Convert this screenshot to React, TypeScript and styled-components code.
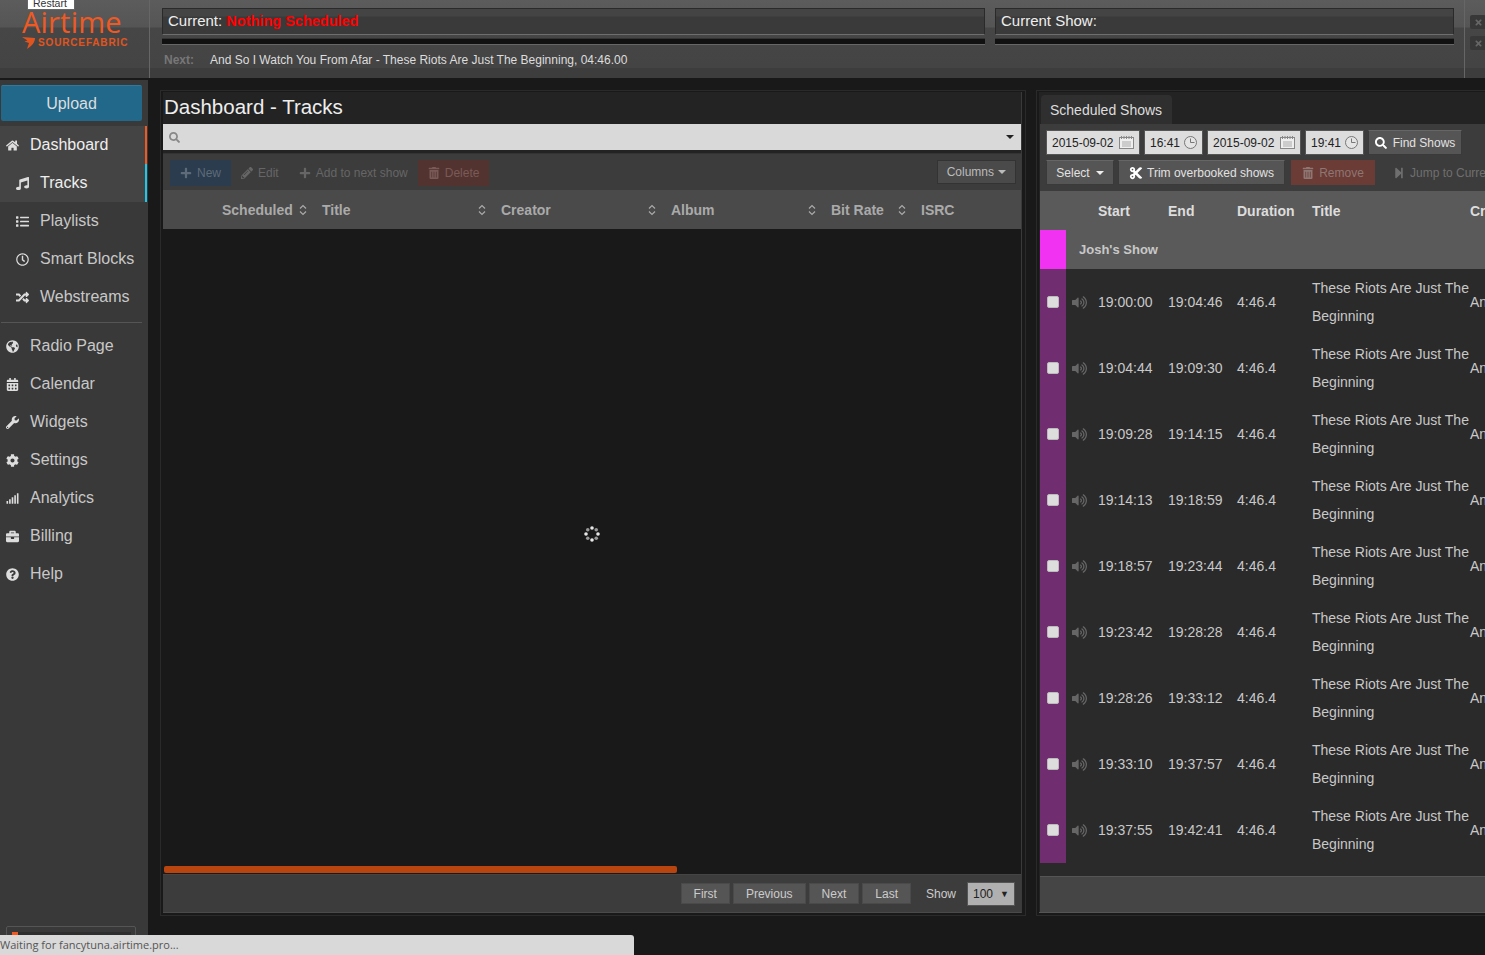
import React from 'react';
import styled, { createGlobalStyle } from 'styled-components';
import {
  FaBriefcase,
  FaCalendarAlt,
  FaCog,
  FaCut,
  FaGlobeAmericas,
  FaHome,
  FaList,
  FaMusic,
  FaPencilAlt,
  FaPlus,
  FaQuestionCircle,
  FaRandom,
  FaRegClock,
  FaSearch,
  FaSignal,
  FaStepForward,
  FaTimes,
  FaTrashAlt,
  FaVolumeUp,
  FaWrench,
} from 'react-icons/fa';

const GlobalStyle = createGlobalStyle`
  html, body {
    margin: 0;
    padding: 0;
    height: 100%;
    overflow: hidden;
    background: #191919;
  }
  * { box-sizing: border-box; }
  body {
    font-family: "Liberation Sans", Arial, sans-serif;
    font-size: 14px;
    color: #ccc;
  }
`;

const Page = styled.div`
  position: relative;
  display: flex;
  flex-direction: column;
  width: 1485px;
  height: 955px;
  overflow: hidden;
`;

/* header */
const Header = styled.header`
  flex: 0 0 78px;
  display: flex;
  background: linear-gradient(#5c5c5c 0, #555 27px, #464646 28px, #444 68px, #3d3d3d 68px);
`;

const LogoCol = styled.div`
  flex: 0 0 150px;
  border-right: 1px solid #666;
  padding: 7px 0 0 22px;
  margin-bottom: 0;
`;

const LogoWord = styled.div`
  font-family: "Open Sans", sans-serif;
  font-size: 29px;
  line-height: 30px;
  letter-spacing: 0.2px;
  color: #f05a22;
`;

const LogoSub = styled.div`
  display: flex;
  align-items: center;
  gap: 3px;
  margin-top: 0;
  font-size: 10px;
  line-height: 12px;
  font-weight: 700;
  letter-spacing: 0.85px;
  color: #e0551f;
`;

const NowPlaying = styled.div`
  flex: 0 0 1315px;
  padding: 8px 0 0 12px;
  border-right: 1px solid #666;
`;

const NowRow = styled.div`
  display: flex;
  gap: 10px;
`;

const NowCol = styled.div<{ $w: number }>`
  width: ${(p) => p.$w}px;
`;

const NowBox = styled.div`
  height: 27px;
  padding: 3px 5px 0;
  border: 1px solid #2a2a2a;
  border-bottom: 1px solid #6e6e6e;
  background: linear-gradient(#444 0, #444 7px, #3a3a3a 8px);
  font-size: 15px;
  line-height: 17px;
  color: #eee;
`;

const Nothing = styled.span`
  font-weight: 700;
  font-size: 14.5px;
  color: #f00;
`;

const ProgressTrack = styled.div`
  height: 7px;
  margin-top: 3px;
  background: #111;
  border-top: 1px solid #333;
  border-bottom: 1px solid #666;
`;

const NextLine = styled.div`
  display: flex;
  margin: 8px 0 0 2px;
  font-size: 12px;
  line-height: 15px;
  color: #ddd;
`;

const NextLabel = styled.span`
  flex: 0 0 46px;
  font-weight: 700;
  color: #777;
`;

const CloseCol = styled.div`
  flex: 1;
  display: flex;
  flex-direction: column;
  gap: 7px;
  padding: 15px 0 0 5px;
`;

const CloseBtn = styled.div`
  width: 16px;
  height: 14px;
  display: flex;
  align-items: center;
  justify-content: center;
  background: #383838;
  border-radius: 2px;
  color: #666;
  font-size: 9px;
`;

/* sidebar */
const Body = styled.div`
  flex: 1;
  display: flex;
  min-height: 0;
`;

const Sidebar = styled.nav`
  position: relative;
  flex: 0 0 148px;
  margin-top: 2px;
  padding: 5px 0 0 1px;
  background: #393939;
`;

const Upload = styled.div`
  width: 141px;
  height: 36px;
  display: flex;
  align-items: center;
  justify-content: center;
  background: #22688a;
  border-top: 1px solid #2f7a9c;
  border-radius: 2px;
  font-size: 16px;
  color: #ddd;
`;

const NavList = styled.div`
  margin: 5px 0 0 -1px;
`;

const NavItem = styled.div<{ $sub?: boolean; $bar?: string; $active?: boolean }>`
  height: 38px;
  width: 147px;
  display: flex;
  align-items: center;
  padding-left: ${(p) => (p.$sub ? 16 : 6)}px;
  font-size: 16px;
  background: ${(p) => (p.$active ? '#444' : 'transparent')};
  color: ${(p) => (p.$active ? '#eee' : '#c8c8c8')};
  border-right: 2px solid ${(p) => p.$bar || 'transparent'};
`;

const NavIcon = styled.span`
  flex: 0 0 24px;
  display: flex;
  align-items: center;
  font-size: 13px;
  color: #ddd;
`;

const NavRule = styled.div`
  width: 141px;
  height: 1px;
  margin: 6px 0 4px 1px;
  background: #555;
`;

const StatusWidget = styled.div`
  position: absolute;
  left: 6px;
  top: 846px;
  width: 130px;
  height: 30px;
  border: 1px solid #555;
  border-radius: 2px;
  padding: 5px 4px 0 5px;
`;

const StatusInner = styled.div`
  height: 20px;
  background: #2e2e2e;
  border-left: 6px solid #f05a22;
`;

/* panels */
const Main = styled.main`
  flex: 1;
  display: flex;
  gap: 10px;
  padding: 12px 0 0 12px;
  min-width: 0;
`;

const Panel = styled.section<{ $w: number }>`
  flex: 0 0 ${(p) => p.$w}px;
  height: 826px;
  padding: 1px 0 1px 2px;
  border: 1px solid #2a2a2a;
  overflow: hidden;
  display: flex;
  flex-direction: column;
`;

const LibInner = styled.div`
  width: 859px;
  height: 821px;
  display: flex;
  flex-direction: column;
  background: #232323;
  border-right: 1px solid #3a3a3a;
  border-bottom: 1px solid #4a4a4a;
`;

const Title = styled.h1`
  flex: 0 0 32px;
  margin: 0;
  padding: 3px 0 0 1px;
  font-size: 20.5px;
  line-height: 24px;
  font-weight: 400;
  color: #eee;
`;

const SearchBar = styled.div`
  flex: 0 0 26px;
  display: flex;
  align-items: center;
  justify-content: space-between;
  padding: 0 7px 0 6px;
  background: #d9d9d9;
  color: #888;
  font-size: 11px;
`;

const Caret = styled.span`
  width: 0;
  height: 0;
  border-left: 4px solid transparent;
  border-right: 4px solid transparent;
  border-top: 4px solid ${(p) => p.color || '#222'};
`;

const LibToolbar = styled.div`
  flex: 0 0 37px;
  margin-top: 3px;
  display: flex;
  align-items: flex-start;
  padding: 6px 5px 0 7px;
  background: #3c3c3c;
  border-top: 1px solid #333;
`;

const ToolBtn = styled.div<{ $bg?: string; $color?: string }>`
  height: 26px;
  display: flex;
  align-items: center;
  gap: 5px;
  padding: 0 10px;
  font-size: 12px;
  font-weight: 400;
  color: ${(p) => p.$color || '#666'};
  background: ${(p) => p.$bg || 'transparent'};
`;

const ColumnsBtn = styled.div`
  margin-left: auto;
  height: 24px;
  display: flex;
  align-items: center;
  gap: 4px;
  padding: 0 9px;
  background: #4a4a4a;
  border: 1px solid #333;
  font-size: 12px;
  color: #bbb;
`;

const LibHead = styled.div`
  flex: 0 0 39px;
  display: grid;
  grid-template-columns: 59px 100px 179px 170px 160px 90px 1fr;
  align-items: center;
  background: #4a4a4a;
  font-size: 14px;
  font-weight: 700;
  color: #aaa;
`;

const SortCell = styled.div`
  display: flex;
  align-items: center;
  justify-content: space-between;
  padding-right: 15px;
  color: #aaa;
`;

const LibBody = styled.div`
  flex: 1;
  display: flex;
  align-items: center;
  justify-content: center;
  padding-bottom: 28px;
  background: #191919;
`;

const Scrollbar = styled.div`
  flex: 0 0 8px;
  background: #191919;
`;

const ScrollThumb = styled.div`
  width: 513px;
  height: 7px;
  margin-left: 1px;
  background: #b8450f;
  border-radius: 2px;
`;

const Pager = styled.div`
  flex: 0 0 38px;
  display: flex;
  align-items: center;
  justify-content: flex-end;
  gap: 3px;
  padding: 0 6px 0 0;
  background: #3c3c3c;
  border-top: 1px solid #444;
`;

const PageBtn = styled.div`
  height: 21px;
  display: flex;
  align-items: center;
  padding: 0 12px;
  background: #555;
  border: 1px solid #4a4a4a;
  font-size: 12px;
  color: #ccc;
`;

const ShowLabel = styled.span`
  margin: 0 8px 0 12px;
  font-size: 12px;
  color: #ccc;
`;

const PageSelect = styled.div`
  width: 48px;
  height: 24px;
  display: flex;
  align-items: center;
  justify-content: space-between;
  padding: 0 5px;
  background: #b0b0b0;
  border: 1px solid #555;
  font-size: 12px;
  color: #222;
`;

const SmallTri = styled.span`
  font-size: 9px;
  color: #222;
`;

/* schedule */
const SchedInner = styled.div`
  width: 470px;
  height: 821px;
  display: flex;
  flex-direction: column;
  background: #232323;
  border-bottom: 1px solid #555;
`;

const TabStrip = styled.div`
  flex: 0 0 32px;
  display: flex;
  align-items: flex-end;
  padding-left: 2px;
`;

const Tab = styled.div`
  width: 131px;
  height: 29px;
  padding: 0 9px;
  display: flex;
  align-items: center;
  background: #2f2f2f;
  border-radius: 4px 4px 0 0;
  font-size: 14px;
  color: #ddd;
`;

const SchedTools = styled.div`
  flex: 0 0 67px;
  display: flex;
  flex-direction: column;
  gap: 5px;
  padding: 6px 0 0 6px;
  margin-left: 1px;
  background: #3c3c3c;
`;

const ToolRow = styled.div`
  display: flex;
  align-items: center;
  gap: 4px;
  white-space: nowrap;
`;

const DateField = styled.div<{ $w: number }>`
  width: ${(p) => p.$w}px;
  height: 25px;
  display: flex;
  align-items: center;
  justify-content: space-between;
  padding: 0 5px;
  background: #ddd;
  border: 1px solid #555;
  font-size: 12px;
  color: #222;
`;

const DarkBtn = styled.div<{ $w?: number; $gap?: number }>`
  ${(p) => (p.$w ? `width: ${p.$w}px;` : '')}
  height: 25px;
  display: flex;
  align-items: center;
  justify-content: center;
  gap: ${(p) => p.$gap ?? 6}px;
  background: #555;
  border: 1px solid #3a3a3a;
  border-top-color: #666;
  font-size: 12px;
  color: #e2e2e2;
`;

const RemoveBtn = styled.div`
  width: 84px;
  height: 25px;
  display: flex;
  align-items: center;
  justify-content: center;
  gap: 5px;
  margin-left: 2px;
  background: #6b3b36;
  font-size: 12px;
  font-weight: 400;
  color: #8e7672;
`;

const JumpBtn = styled.div`
  display: flex;
  align-items: center;
  gap: 5px;
  margin-left: 14px;
  font-size: 12px;
  color: #6f6f6f;
`;

const gridCols = '26px 32px 70px 69px 75px 158px 1fr';

const SchedHead = styled.div`
  flex: 0 0 39px;
  margin-left: 1px;
  display: grid;
  grid-template-columns: ${gridCols};
  align-items: center;
  background: #5a5a5a;
  font-size: 14px;
  font-weight: 700;
  color: #ddd;
`;

const ShowRow = styled.div`
  flex: 0 0 39px;
  margin-left: 1px;
  display: flex;
  align-items: center;
  background: #5a5a5a;
  font-size: 13px;
  font-weight: 700;
  color: #c8c8c8;
`;

const ShowSwatch = styled.div`
  flex: 0 0 26px;
  height: 100%;
  margin-right: 13px;
  background: #f232f2;
`;

const Rows = styled.div`
  flex: 1;
  margin-left: 1px;
  background: #2a2a2a;
`;

const Row = styled.div`
  height: 66px;
  display: grid;
  grid-template-columns: ${gridCols};
  align-items: center;
  font-size: 14px;
  color: #c8c8c8;
  white-space: nowrap;
`;

const CheckCell = styled.div`
  height: 100%;
  display: flex;
  align-items: center;
  justify-content: center;
  background: #702d70;
`;

const Check = styled.span`
  width: 12px;
  height: 12px;
  background: #ddd;
  border: 1px solid #bbb;
  border-radius: 2px;
`;

const SpeakerCell = styled.div`
  display: flex;
  align-items: center;
  padding-left: 6px;
  font-size: 15px;
  color: #666;
`;

const TrackTitle = styled.div`
  line-height: 28px;
  white-space: normal;
`;

const SchedFoot = styled.div`
  flex: 0 0 36px;
  margin-left: 1px;
  background: #454545;
  border-top: 1px solid #555;
`;

/* browser overlays */
const Tooltip = styled.div`
  position: absolute;
  left: 27px;
  top: -4px;
  width: 48px;
  height: 14px;
  padding-left: 5px;
  background: #fff;
  border: 1px solid #666;
  font-size: 10.5px;
  line-height: 12px;
  color: #333;
`;

const BrowserStatus = styled.div`
  position: absolute;
  left: 0;
  bottom: 0;
  width: 634px;
  height: 20px;
  background: #d9d9d9;
  border-radius: 0 3px 0 0;
  font-family: "Open Sans", sans-serif;
  font-size: 11px;
  line-height: 20px;
  color: #555;
`;

function SortIcon() {
  return (
    <svg width="8" height="12" viewBox="0 0 8 12" fill="none" stroke="currentColor" strokeWidth="1.2">
      <path d="M1 4.5 4 1.5 7 4.5M1 7.5 4 10.5 7 7.5" />
    </svg>
  );
}

function Mark() {
  return (
    <svg width="13" height="12" viewBox="0 0 13 12" fill="#e0551f">
      <path d="M0 0 13 1C13 5 10 9 5 12L7 6 2.5 4.5 5.5 3.5Z" />
    </svg>
  );
}

function Spinner() {
  const dots = [0, 45, 90, 135, 180, 225, 270, 315];
  return (
    <svg width="16" height="16" viewBox="0 0 16 16">
      {dots.map((a, i) => (
        <circle
          key={a}
          cx={8 + 6 * Math.cos((a * Math.PI) / 180)}
          cy={8 + 6 * Math.sin((a * Math.PI) / 180)}
          r="1.8"
          fill={i % 2 ? '#999' : '#e8e8e8'}
        />
      ))}
    </svg>
  );
}

function CalIcon() {
  return (
    <svg width="15" height="13" viewBox="0 0 15 13" fill="#eee" stroke="#888" strokeWidth="1">
      <rect x="0.5" y="1.5" width="14" height="11" />
      <path d="M2.5 0V3M5 0V3M7.5 0V3M10 0V3M12.5 0V3" />
      <path d="M3 6H12M3 8H12M3 10H12" stroke="#aaa" />
    </svg>
  );
}

function ClockIcon() {
  return (
    <svg width="13" height="13" viewBox="0 0 13 13" fill="#e4e4e4" stroke="#777" strokeWidth="1">
      <circle cx="6.5" cy="6.5" r="6" />
      <path d="M6.5 2.5V6.5H10.5" />
    </svg>
  );
}

const topNav = [
  { label: 'Radio Page', icon: <FaGlobeAmericas /> },
  { label: 'Calendar', icon: <FaCalendarAlt /> },
  { label: 'Widgets', icon: <FaWrench /> },
  { label: 'Settings', icon: <FaCog /> },
  { label: 'Analytics', icon: <FaSignal /> },
  { label: 'Billing', icon: <FaBriefcase /> },
  { label: 'Help', icon: <FaQuestionCircle /> },
];

const libCols = ['Title', 'Creator', 'Album'];

const tracks = [
  ['19:00:00', '19:04:46'],
  ['19:04:44', '19:09:30'],
  ['19:09:28', '19:14:15'],
  ['19:14:13', '19:18:59'],
  ['19:18:57', '19:23:44'],
  ['19:23:42', '19:28:28'],
  ['19:28:26', '19:33:12'],
  ['19:33:10', '19:37:57'],
  ['19:37:55', '19:42:41'],
];

export default function App() {
  return (
    <Page>
      <GlobalStyle />
      <Header>
        <LogoCol>
          <LogoWord>Airtime</LogoWord>
          <LogoSub>
            <Mark />
            SOURCEFABRIC
          </LogoSub>
        </LogoCol>
        <NowPlaying>
          <NowRow>
            <NowCol $w={823}>
              <NowBox>
                Current: <Nothing>Nothing Scheduled</Nothing>
              </NowBox>
              <ProgressTrack />
            </NowCol>
            <NowCol $w={459}>
              <NowBox>Current Show:</NowBox>
              <ProgressTrack />
            </NowCol>
          </NowRow>
          <NextLine>
            <NextLabel>Next:</NextLabel>
            And So I Watch You From Afar - These Riots Are Just The Beginning, 04:46.00
          </NextLine>
        </NowPlaying>
        <CloseCol>
          <CloseBtn><FaTimes /></CloseBtn>
          <CloseBtn><FaTimes /></CloseBtn>
        </CloseCol>
      </Header>

      <Body>
        <Sidebar>
          <Upload>Upload</Upload>
          <NavList>
            <NavItem $active $bar="#f05a22">
              <NavIcon><FaHome /></NavIcon>Dashboard
            </NavItem>
            <NavItem $active $sub $bar="#1fc8ea">
              <NavIcon><FaMusic /></NavIcon>Tracks
            </NavItem>
            <NavItem $sub>
              <NavIcon><FaList /></NavIcon>Playlists
            </NavItem>
            <NavItem $sub>
              <NavIcon><FaRegClock /></NavIcon>Smart Blocks
            </NavItem>
            <NavItem $sub>
              <NavIcon><FaRandom /></NavIcon>Webstreams
            </NavItem>
            <NavRule />
            {topNav.map((n) => (
              <NavItem key={n.label}>
                <NavIcon>{n.icon}</NavIcon>
                {n.label}
              </NavItem>
            ))}
          </NavList>
          <StatusWidget>
            <StatusInner />
          </StatusWidget>
        </Sidebar>

        <Main>
          <Panel $w={866}>
            <LibInner>
              <Title>Dashboard - Tracks</Title>
              <SearchBar>
                <FaSearch />
                <Caret />
              </SearchBar>
              <LibToolbar>
                <ToolBtn $bg="#2a3c4e" $color="#5e6b78">
                  <FaPlus />New
                </ToolBtn>
                <ToolBtn>
                  <FaPencilAlt />Edit
                </ToolBtn>
                <ToolBtn>
                  <FaPlus />Add to next show
                </ToolBtn>
                <ToolBtn $bg="#533330" $color="#7a5a56">
                  <FaTrashAlt />Delete
                </ToolBtn>
                <ColumnsBtn>
                  Columns <Caret color="#bbb" />
                </ColumnsBtn>
              </LibToolbar>
              <LibHead>
                <span />
                <SortCell>Scheduled <SortIcon /></SortCell>
                {libCols.map((c) => (
                  <SortCell key={c}>{c} <SortIcon /></SortCell>
                ))}
                <SortCell>Bit Rate <SortIcon /></SortCell>
                <span>ISRC</span>
              </LibHead>
              <LibBody>
                <Spinner />
              </LibBody>
              <Scrollbar>
                <ScrollThumb />
              </Scrollbar>
              <Pager>
                <PageBtn>First</PageBtn>
                <PageBtn>Previous</PageBtn>
                <PageBtn>Next</PageBtn>
                <PageBtn>Last</PageBtn>
                <ShowLabel>Show</ShowLabel>
                <PageSelect>
                  100 <SmallTri>▼</SmallTri>
                </PageSelect>
              </Pager>
            </LibInner>
          </Panel>

          <Panel $w={470}>
            <SchedInner>
              <TabStrip>
                <Tab>Scheduled Shows</Tab>
              </TabStrip>
              <SchedTools>
                <ToolRow>
                  <DateField $w={94}>2015-09-02 <CalIcon /></DateField>
                  <DateField $w={59}>16:41 <ClockIcon /></DateField>
                  <DateField $w={94}>2015-09-02 <CalIcon /></DateField>
                  <DateField $w={59}>19:41 <ClockIcon /></DateField>
                  <DarkBtn $w={94}>
                    <FaSearch color="#fff" />Find Shows
                  </DarkBtn>
                </ToolRow>
                <ToolRow>
                  <DarkBtn $w={68}>
                    Select <Caret color="#eee" />
                  </DarkBtn>
                  <DarkBtn $w={167} $gap={4}>
                    <FaCut color="#fff" size={14} />Trim overbooked shows
                  </DarkBtn>
                  <RemoveBtn>
                    <FaTrashAlt />Remove
                  </RemoveBtn>
                  <JumpBtn>
                    <FaStepForward />Jump to Current
                  </JumpBtn>
                </ToolRow>
              </SchedTools>
              <SchedHead>
                <span />
                <span />
                <span>Start</span>
                <span>End</span>
                <span>Duration</span>
                <span>Title</span>
                <span>Creator</span>
              </SchedHead>
              <ShowRow>
                <ShowSwatch />
                Josh's Show
              </ShowRow>
              <Rows>
                {tracks.map(([start, end]) => (
                  <Row key={start}>
                    <CheckCell><Check /></CheckCell>
                    <SpeakerCell><FaVolumeUp /></SpeakerCell>
                    <span>{start}</span>
                    <span>{end}</span>
                    <span>4:46.4</span>
                    <TrackTitle>These Riots Are Just The Beginning</TrackTitle>
                    <span>And So I Watch</span>
                  </Row>
                ))}
              </Rows>
              <SchedFoot />
            </SchedInner>
          </Panel>
        </Main>
      </Body>

      <Tooltip>Restart</Tooltip>
      <BrowserStatus>Waiting for fancytuna.airtime.pro...</BrowserStatus>
    </Page>
  );
}
